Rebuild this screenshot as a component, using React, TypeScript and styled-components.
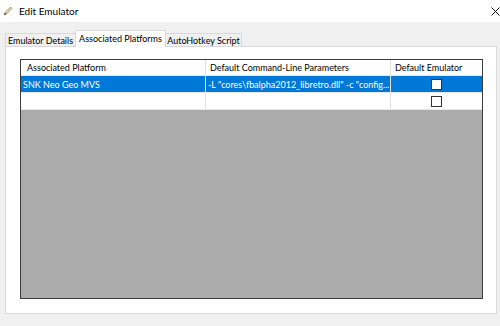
import React from "react";
import styled, { createGlobalStyle } from "styled-components";

const Global = createGlobalStyle`
  html, body { margin: 0; padding: 0; background: #f0f0f0; }
  body { font-family: Lato, "Noto Sans", sans-serif; }
  * { box-sizing: border-box; }
`;

const Window = styled.div`
  width: 500px;
  height: 326px;
  display: flex;
  flex-direction: column;
  background: #f0f0f0;
  overflow: hidden;
`;

const TitleBar = styled.div`
  height: 22px;
  flex: none;
  background: #ffffff;
  display: flex;
  align-items: center;
  padding-left: 3px;
  font-size: 10px;
  color: #000;
`;

const TitleText = styled.span`
  margin-left: 6px;
  flex: 1;
`;

const CloseBox = styled.div`
  width: 10px;
  height: 22px;
  display: flex;
  align-items: center;
  justify-content: flex-end;
`;

const Body = styled.div`
  flex: 1;
  display: flex;
  flex-direction: column;
  padding: 9px 3px 0 5px;
`;

const TabRow = styled.div`
  height: 16px;
  display: flex;
  align-items: flex-end;
  position: relative;
  z-index: 1;
  margin-bottom: -1px;
`;

const Tab = styled.div<{ $active?: boolean; $w: number }>`
  height: ${(p) => (p.$active ? "17px" : "14px")};
  width: ${(p) => p.$w}px;
  background: ${(p) => (p.$active ? "#ffffff" : "#f0f0f0")};
  border: 1px solid #d9d9d9;
  border-bottom: ${(p) => (p.$active ? "none" : "1px solid #d9d9d9")};
  font-size: 9px;
  color: #000;
  display: flex;
  align-items: center;
  justify-content: center;
  padding-bottom: ${(p) => (p.$active ? "2px" : "0")};
  white-space: nowrap;
  & + & { margin-left: -1px; }
`;

const Panel = styled.div`
  height: 268px;
  background: #ffffff;
  border: 1px solid #d9d9d9;
  padding: 12px 13px 14px 14px;
  display: flex;
`;

const Grid = styled.div`
  flex: 1;
  border: 1px solid #3c3c3c;
  background: #ababab;
  display: flex;
  flex-direction: column;
`;

const Row = styled.div<{ $selected?: boolean }>`
  height: 17px;
  display: grid;
  grid-template-columns: 185px 185px 1fr;
  background: ${(p) => (p.$selected ? "#0078d7" : "#ffffff")};
  color: ${(p) => (p.$selected ? "#ffffff" : "#000000")};
  font-size: 9px;
`;

const HeaderRow = styled(Row)`
  height: 16px;
`;

const Cell = styled.div<{ $pad?: number; $center?: boolean; $last?: boolean }>`
  display: flex;
  align-items: center;
  justify-content: ${(p) => (p.$center ? "center" : "flex-start")};
  padding-left: ${(p) => p.$pad ?? 2}px;
  border-right: ${(p) => (p.$last ? "none" : "1px solid #e3e3e3")};
  border-bottom: 1px solid #e8e8e8;
  white-space: nowrap;
  overflow: hidden;
`;

const Check = styled.div`
  width: 11px;
  height: 11px;
  background: #ffffff;
  border: 1px solid #333333;
`;

const Pencil = () => (
  <svg width="10" height="10" viewBox="0 0 10 10">
    <path d="M1 9 L2 6.5 L7.5 1 L9 2.5 L3.5 8 Z" fill="#e8d7a6" stroke="#8a7a55" strokeWidth="0.7" />
    <path d="M1 9 L2 6.5 L3.5 8 Z" fill="#5a5a5a" />
  </svg>
);

const CloseIcon = () => (
  <svg width="9" height="9" viewBox="0 0 9 9">
    <path d="M0.5 0.5 L8.5 8.5 M8.5 0.5 L0.5 8.5" stroke="#111" strokeWidth="1" />
  </svg>
);

export default function App() {
  return (
    <>
      <Global />
      <Window>
        <TitleBar>
          <Pencil />
          <TitleText>Edit Emulator</TitleText>
          <CloseBox>
            <CloseIcon />
          </CloseBox>
        </TitleBar>
        <Body>
          <TabRow>
            <Tab $w={71}>Emulator Details</Tab>
            <Tab $active $w={91}>Associated Platforms</Tab>
            <Tab $w={77}>AutoHotkey Script</Tab>
          </TabRow>
          <Panel>
            <Grid>
              <HeaderRow>
                <Cell $pad={6}>Associated Platform</Cell>
                <Cell $pad={4}>Default Command-Line Parameters</Cell>
                <Cell $pad={4} $last>Default Emulator</Cell>
              </HeaderRow>
              <Row $selected>
                <Cell $pad={2}>SNK Neo Geo MVS</Cell>
                <Cell $pad={2}>-L "cores\fbalpha2012_libretro.dll" -c "config...</Cell>
                <Cell $center $last $pad={0}>
                  <Check />
                </Cell>
              </Row>
              <Row>
                <Cell />
                <Cell />
                <Cell $center $last $pad={0}>
                  <Check />
                </Cell>
              </Row>
            </Grid>
          </Panel>
        </Body>
      </Window>
    </>
  );
}
